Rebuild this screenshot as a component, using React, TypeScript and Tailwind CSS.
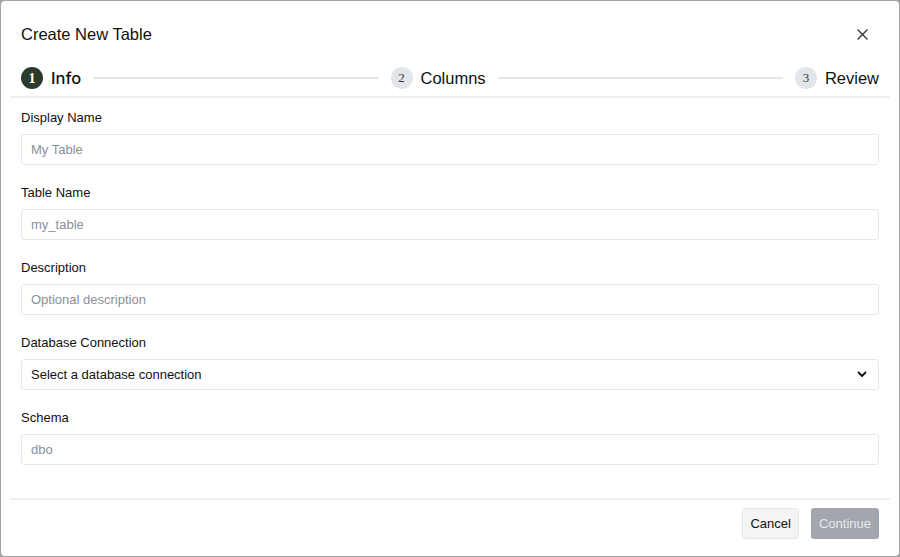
import React from "react";

const fields = [
  { label: "Display Name", placeholder: "My Table" },
  { label: "Table Name", placeholder: "my_table" },
  { label: "Description", placeholder: "Optional description" },
];

function Field({ label, placeholder, first }: { label: string; placeholder: string; first?: boolean }) {
  return (
    <div className={first ? "" : "mt-[19px]"}>
      <div className="text-[13px] leading-[18px] font-medium text-[#111]">{label}</div>
      <div className="mt-[7px] h-[31px] rounded-[3px] border border-[#e5e7eb] flex items-center px-[9px] text-[13px] text-[#8a8f98]">
        {placeholder}
      </div>
    </div>
  );
}

const serif = { fontFamily: '"Liberation Serif", serif' };

export default function App() {
  return (
    <div
      className="w-[900px] h-[557px] bg-[#a3a3a3] pt-px pl-px pr-px pb-px"
      style={{ fontFamily: '"Liberation Sans", Arial, sans-serif' }}
    >
      <div className="w-full h-full bg-white rounded-[4px] flex flex-col px-[9px]">
        <div className="px-[11px] pt-[21px] flex items-center justify-between">
          <div className="text-[16.5px] leading-6 text-[#111] font-medium">Create New Table</div>
          <svg width="11" height="11" viewBox="0 0 11 11" className="mr-[11px]">
            <path d="M1 1L10 10M10 1L1 10" stroke="#333" strokeWidth="1.4" strokeLinecap="round" />
          </svg>
        </div>
        <div className="px-[11px] mt-[21px] flex items-center h-[22px]">
          <div
            className="w-[22px] h-[22px] rounded-full bg-[#2a3b2b] text-white flex items-center justify-center text-[14px] font-bold"
            style={serif}
          >
            1
          </div>
          <div className="ml-2 text-[#111]" style={{ fontFamily: "Inter, sans-serif", fontWeight: 500, fontSize: "16.5px" }}>
            Info
          </div>
          <div className="flex-1 mx-3 h-[2px] bg-[#e5e7eb]" />
          <div
            className="w-[22px] h-[22px] rounded-full bg-[#e2e5e9] text-[#333] flex items-center justify-center text-[13px]"
            style={serif}
          >
            2
          </div>
          <div className="ml-2 text-[16.5px] text-[#111]">Columns</div>
          <div className="flex-1 mx-3 h-[2px] bg-[#e5e7eb]" />
          <div
            className="w-[22px] h-[22px] rounded-full bg-[#e2e5e9] text-[#333] flex items-center justify-center text-[13px]"
            style={serif}
          >
            3
          </div>
          <div className="ml-2 text-[16.5px] text-[#111]">Review</div>
        </div>
        <div className="mt-[7px] h-[2px] bg-[#eeeff1]" />
        <div className="px-[11px] mt-[11px]">
          {fields.map((f, i) => (
            <Field key={f.label} label={f.label} placeholder={f.placeholder} first={i === 0} />
          ))}
          <div className="mt-[19px]">
            <div className="text-[13px] leading-[18px] font-medium text-[#111]">Database Connection</div>
            <div className="mt-[7px] h-[31px] rounded-[3px] border border-[#e5e7eb] flex items-center justify-between px-[9px] text-[13px] text-[#111]">
              <span>Select a database connection</span>
              <svg width="10" height="7" viewBox="0 0 10 7" className="mr-[2px]">
                <path d="M1.5 1.5L5 5L8.5 1.5" stroke="#111" strokeWidth="1.8" fill="none" strokeLinecap="round" strokeLinejoin="round" />
              </svg>
            </div>
          </div>
          <Field label="Schema" placeholder="dbo" />
        </div>
        <div className="mt-[33px] h-[2px] bg-[#eeeff1]" />
        <div className="px-[11px] mt-[8px] flex justify-end gap-3">
          <div className="h-[31px] px-[7px] rounded-[3px] border border-[#e5e7eb] bg-[#f3f4f6] flex items-center text-[13px] text-[#111]">
            Cancel
          </div>
          <div className="h-[31px] px-2 rounded-[3px] bg-[#a3a6ad] flex items-center text-[13px] text-[#e8e9ec]">
            Continue
          </div>
        </div>
      </div>
    </div>
  );
}
